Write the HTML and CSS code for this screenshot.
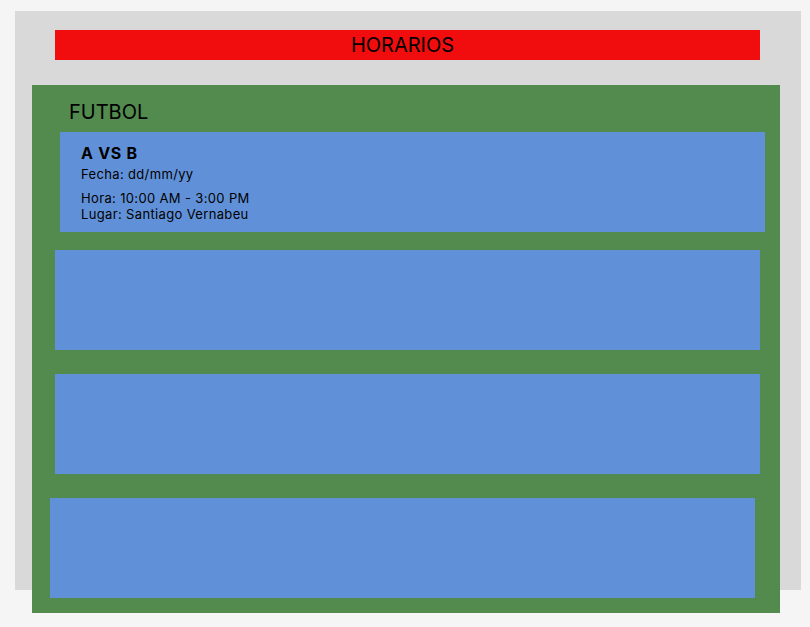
FILE: index.html
```html
<!DOCTYPE html>
<html lang="es">
<head>
<meta charset="utf-8">
<title>Horarios</title>
<link rel="stylesheet" href="styles.css">
</head>
<body>
<div class="panel">
  <header class="title-bar">HORARIOS</header>
  <section class="sport">
    <h2 class="sport-name">FUTBOL</h2>
    <article class="card card-1">
      <h3 class="match">A VS B</h3>
      <p class="date">Fecha: dd/mm/yy</p>
      <p class="info">Hora: 10:00 AM - 3:00 PM<br>Lugar: Santiago Vernabeu</p>
    </article>
    <article class="card card-2"></article>
    <article class="card card-3"></article>
    <article class="card card-4"></article>
  </section>
</div>
</body>
</html>
```
FILE: styles.css
```css
html, body {
  margin: 0;
  padding: 0;
  background: #f5f5f5;
  font-family: Inter, "Noto Sans", sans-serif;
  color: #000;
}
body {
  padding: 11px 0 0 15px;
  height: 627px;
  box-sizing: border-box;
  overflow: hidden;
}
.panel {
  width: 786px;
  height: 579px;
  background: #d9d9d9;
  padding-top: 19px;
  box-sizing: border-box;
}
.title-bar {
  margin-left: 40px;
  width: 705px;
  height: 30px;
  box-sizing: border-box;
  padding-right: 10px;
  background: #f10d0d;
  font-size: 20px;
  line-height: 30px;
  text-align: center;
}
.sport {
  margin: 25px 0 0 17px;
  width: 748px;
  height: 528px;
  background: #538a4e;
  box-sizing: border-box;
  padding-top: 15px;
  display: flex;
  flex-direction: column;
}
.sport-name {
  margin: 0 0 8px 37px;
  font-size: 20px;
  font-weight: 400;
  line-height: 24px;
}
.card {
  width: 705px;
  height: 100px;
  background: #6091d8;
  box-sizing: border-box;
  flex: none;
}
.card-1 { margin-left: 28px; padding: 11px 0 0 21px; }
.card-2 { margin-left: 23px; margin-top: 18px; }
.card-3 { margin-left: 23px; margin-top: 24px; }
.card-4 { margin-left: 18px; margin-top: 24px; }
.match {
  margin: 0;
  font-size: 16px;
  font-weight: 700;
  line-height: 20px;
  letter-spacing: 0.7px;
}
.date {
  margin: 3px 0 0;
  font-size: 13px;
  line-height: 16px;
  letter-spacing: 0.35px;
}
.info {
  margin: 8px 0 0;
  font-size: 13px;
  line-height: 16px;
  letter-spacing: 0.35px;
}
```
